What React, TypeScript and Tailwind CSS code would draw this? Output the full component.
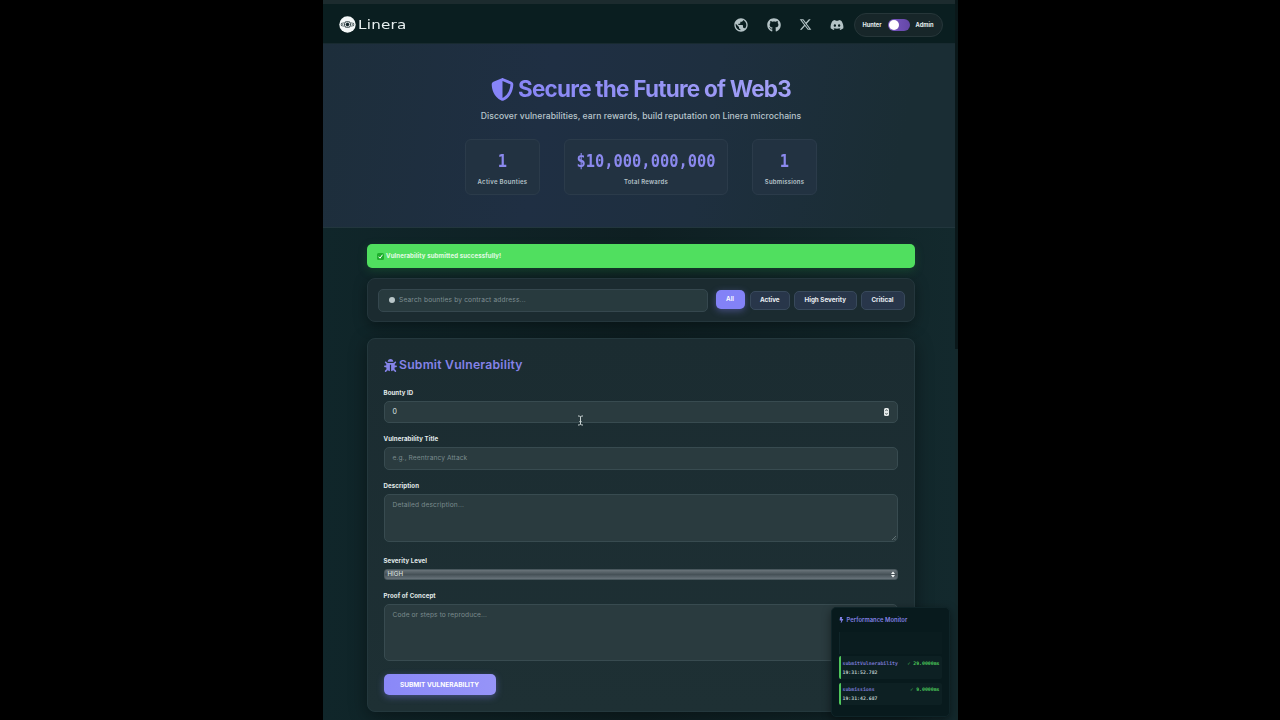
import type { ReactNode } from "react"
import { FaBolt, FaBug, FaDiscord, FaGithub } from "react-icons/fa"
import { FaShieldHalved, FaXTwitter } from "react-icons/fa6"
import { MdPublic } from "react-icons/md"

const stats = [
  { value: "1", label: "Active Bounties", box: "w-[75px]", tracking: "tracking-[0.3px]" },
  { value: "$10,000,000,000", label: "Total Rewards", box: "w-[164px]", tracking: "tracking-[0.25px]" },
  { value: "1", label: "Submissions", box: "w-[65px]", tracking: "tracking-[0.2px]" },
]

const calls = [
  { name: "submitVulnerability", duration: "29.0000ms", time: "19:31:52.782" },
  { name: "submissions", duration: "9.0000ms", time: "19:31:42.687" },
]

function Logo() {
  return (
    <div className="flex items-center gap-[2px]">
      <svg viewBox="0 0 17 17" className="h-[17px] w-[17px]" fill="none">
        <circle cx="8.5" cy="8.5" r="8.2" fill="#f4f8f8" />
        <rect x="5.6" y="5.8" width="5.8" height="5.4" rx="1.6" stroke="#13262a" strokeWidth="0.9" />
        <circle cx="8.5" cy="8.5" r="1.8" fill="#13262a" />
        <path
          d="M4.2 6.2Q3.2 8.5 4.2 10.8M12.8 6.2Q13.8 8.5 12.8 10.8M2.6 6.9Q1.9 8.5 2.6 10.1M14.4 6.9Q15.1 8.5 14.4 10.1"
          stroke="#13262a"
          strokeWidth="0.7"
        />
      </svg>
      <span className="origin-left scale-x-[1.26] font-['DejaVu_Sans'] text-[12px] leading-none tracking-[0.2px] text-[#e8f0f0]">
        Linera
      </span>
    </div>
  )
}

function Header() {
  return (
    <header className="flex h-[44px] shrink-0 items-center justify-between border-t-[4px] border-b border-t-[#1c2b2e] border-b-[#182a30] bg-[#0a1e20] pt-[2px] pr-[12px] pl-[16px]">
      <Logo />
      <div className="flex items-center text-[#b4c3c6]">
        <MdPublic className="mr-[18px] h-[16px] w-[16px]" />
        <FaGithub className="mr-[18px] h-[14px] w-[14px]" />
        <FaXTwitter className="mr-[18px] h-[13px] w-[13px]" />
        <FaDiscord className="mr-[10px] h-[14px] w-[14px]" />
        <div className="flex h-[24px] w-[89px] items-center justify-center gap-[6px] rounded-full border border-[#263639] bg-[#172629] pt-px text-[5.7px] font-bold text-[#e6eeee]">
          <span>Hunter</span>
          <div className="flex h-[12px] w-[22px] items-center rounded-full bg-gradient-to-r from-[#7a5ac4] to-[#6446a6] px-px">
            <div className="h-[10px] w-[10px] rounded-full bg-white" />
          </div>
          <span>Admin</span>
        </div>
      </div>
    </header>
  )
}

function Hero() {
  return (
    <section className="flex h-[184px] shrink-0 flex-col items-center border-b border-[#22363d] bg-[linear-gradient(100deg,#1d2e3b_0%,#1f2f43_35%,#1e2f3f_60%,#1a2d34_90%)] pt-[30px] pl-[5px]">
      <h1 className="flex h-[30px] items-center gap-[4px] bg-gradient-to-r from-[#8583f5] to-[#a3a0f6] bg-clip-text text-[22.5px] font-bold tracking-[-0.77px] whitespace-nowrap text-transparent">
        <FaShieldHalved className="h-[23px] w-[23px] text-[#8784f8]" />
        Secure the Future of Web3
      </h1>
      <p className="mt-[5px] h-[14px] text-[8.6px] leading-[14px] font-medium tracking-[0.05px] whitespace-nowrap text-[#b9c6cc]">
        Discover vulnerabilities, earn rewards, build reputation on Linera microchains
      </p>
      <div className="mt-[16px] flex gap-[24px]">
        {stats.map((stat) => (
          <div
            key={stat.label}
            className={`${stat.box} flex h-[55.5px] flex-col items-center rounded-[6px] border border-[#2b3b4a] bg-[#223241] pt-[10.5px]`}
          >
            <div className="h-[20px] scale-y-[1.12] font-['DejaVu_Sans_Mono'] text-[15.4px] leading-[20px] font-bold text-[#8b89ee]">
              {stat.value}
            </div>
            <div className={`${stat.tracking} mt-[6px] text-[6px] leading-[9px] font-semibold text-[#b5c2c9]`}>
              {stat.label}
            </div>
          </div>
        ))}
      </div>
    </section>
  )
}

function FilterButton({ className, children }: { className: string; children: ReactNode }) {
  return (
    <button
      className={`${className} mt-px h-[19px] shrink-0 rounded-[5px] border border-[#38495b] bg-[#28364a] text-[6.3px] leading-none font-bold text-[#e8edf2]`}
    >
      {children}
    </button>
  )
}

function Filters() {
  return (
    <div className="mt-[10px] flex h-[44px] items-center rounded-[8px] border border-[#24363c] bg-[#1b2b30] pl-[10px] shadow-[0_4px_14px_rgba(0,0,0,0.35)]">
      <div className="mr-[8px] flex h-[23px] w-[330px] shrink-0 items-center rounded-[5px] border border-[#35474e] bg-[#283a3e] pl-[10.5px]">
        <span className="mr-[4px] mb-px h-[6px] w-[6px] rounded-full bg-[#b9c6c9]" />
        <span className="pt-[2px] text-[6.6px] tracking-[0.17px] text-[#7f8f93]">
          Search bounties by contract address...
        </span>
      </div>
      <button className="mr-[5px] mb-px h-[19.5px] w-[29px] shrink-0 rounded-[5px] bg-[#8382f7] text-[6.3px] leading-none font-semibold text-white shadow-[0_2px_7px_rgba(131,130,247,0.4)]">
        All
      </button>
      <FilterButton className="mr-[4px] w-[40.5px]">Active</FilterButton>
      <FilterButton className="mr-[4px] w-[62.5px]">High Severity</FilterButton>
      <FilterButton className="w-[44px]">Critical</FilterButton>
    </div>
  )
}

function Label({ children }: { children: ReactNode }) {
  return (
    <label className="block h-[9px] text-[6.1px] leading-[9px] font-bold tracking-[0.1px] text-[#e4ecec]">{children}</label>
  )
}

function Spinner() {
  return (
    <svg viewBox="0 0 5 8" className="h-[8px] w-[5px]">
      <rect width="5" height="8" rx="1.6" fill="#e5eaea" />
      <path d="M1.3 3.1 2.5 1.6 3.7 3.1M1.3 4.9 2.5 6.4 3.7 4.9" fill="none" stroke="#3c4a4d" strokeWidth="0.8" />
    </svg>
  )
}

function SubmitForm() {
  const field = "rounded-[5px] border border-[#384b50] bg-[#2a3b3f] px-[8px] text-[6.6px] text-[#7b8b8e]"

  return (
    <div className="mt-[16px] h-[374px] rounded-[8px] border border-[#24383d] bg-gradient-to-b from-[#1b2c31] to-[#1e3034] pt-[18px] pr-[15.5px] pl-[16px] shadow-[0_4px_18px_rgba(0,0,0,0.4)]">
      <h2 className="flex h-[16px] items-center gap-[2.5px] text-[12.2px] font-semibold tracking-[0.22px] text-[#8583e8]">
        <FaBug className="h-[13px] w-[13px]" />
        Submit Vulnerability
      </h2>

      <div className="mt-[14.5px]">
        <Label>Bounty ID</Label>
        <div className={`${field} mt-[4.5px] flex h-[22px] items-center justify-between`}>
          <span className="text-[7px] text-[#dfe7e7]">0</span>
          <Spinner />
        </div>
      </div>

      <div className="mt-[11px]">
        <Label>Vulnerability Title</Label>
        <div className={`${field} mt-[4px] flex h-[22.5px] items-center pt-[1.5px] tracking-[0.11px]`}>
          e.g., Reentrancy Attack
        </div>
      </div>

      <div className="mt-[11px]">
        <Label>Description</Label>
        <div className={`${field} relative mt-[4px] h-[48.5px] pt-[6px] leading-[9px] tracking-[0.15px]`}>
          Detailed description...
          <svg viewBox="0 0 5 5" className="absolute right-px bottom-px h-[4px] w-[4px]">
            <path d="M0 5 5 0M3 5 5 3" stroke="#8b9a9c" strokeWidth="0.7" />
          </svg>
        </div>
      </div>

      <div className="mt-[14px]">
        <Label>Severity Level</Label>
        <div className="mt-[4px] flex h-[11px] items-center justify-between rounded-[3px] border border-[#4a585e] bg-gradient-to-b from-[#6a747a] via-[#465157] to-[#68737a] pr-[2px] pl-[3px] text-[6.2px] leading-none text-[#e2e8e8]">
          <span>HIGH</span>
          <svg viewBox="0 0 4 7" className="h-[7px] w-[4px]" fill="#f4f7f7">
            <path d="M0 2.9 2 0.4 4 2.9ZM0 4.1 2 6.6 4 4.1Z" />
          </svg>
        </div>
      </div>

      <div className="mt-[10.5px]">
        <Label>Proof of Concept</Label>
        <div className={`${field} mt-[4.5px] h-[57px] pt-[6px] leading-[9px] tracking-[0.11px]`}>
          Code or steps to reproduce...
        </div>
      </div>

      <button className="mt-[13px] block h-[21px] w-[112px] rounded-[5px] bg-gradient-to-r from-[#8a88f8] to-[#9694f8] pt-px text-[6.5px] leading-none font-bold text-white shadow-[0_2px_7px_rgba(131,130,247,0.4)]">
        SUBMIT VULNERABILITY
      </button>
    </div>
  )
}

function PerformanceMonitor() {
  return (
    <aside className="absolute top-[607px] left-[508px] h-[110px] w-[119px] rounded-[5px] border border-[#0f2428] bg-[#081a1d] px-[7px] pt-[7px] shadow-[0_3px_10px_rgba(0,0,0,0.45)]">
      <div className="flex h-[10px] items-center gap-[3px] text-[5.8px] font-semibold tracking-[0.06px] text-[#8583e8]">
        <FaBolt className="h-[6px] w-[5px]" />
        <span className="pt-px">Performance Monitor</span>
      </div>
      <div className="mt-[7px] h-[22px] border-l border-[#10262a] bg-[#0a1c1f]" />
      <div className="mt-[2px] flex flex-col gap-[4px]">
        {calls.map((call) => (
          <div
            key={call.name}
            className="h-[22.5px] rounded-[2px] border-l-2 border-[#4fc65c] bg-[#0d2023] pt-[2.5px] pr-[2px] pl-[2px] font-['DejaVu_Sans_Mono'] text-[4.85px] leading-[9px] font-bold"
          >
            <div className="flex justify-between whitespace-nowrap">
              <span className="text-[#7776cf]">{call.name}</span>
              <span className="text-[#4ccb5b]">✓ {call.duration}</span>
            </div>
            <div className="text-[#bdcaca]">{call.time}</div>
          </div>
        ))}
      </div>
    </aside>
  )
}

// Text cursor resting over the Bounty ID field
function TextCursor() {
  return (
    <svg viewBox="0 0 7 11" className="absolute top-[415px] left-[254px] h-[11px] w-[7px]" fill="none">
      <path d="M1 1H2.6L3.5 2 4.4 1H6M1 10H2.6L3.5 9 4.4 10H6M3.5 2V9M2.4 6.5H4.6" stroke="#c8d2d2" strokeWidth="1" />
    </svg>
  )
}

export default function App() {
  return (
    <div className="flex h-[720px] w-[1280px] justify-center overflow-hidden bg-black font-['Inter',sans-serif]">
      <div className="relative flex h-[720px] w-[635px] flex-col overflow-hidden bg-gradient-to-b from-[#11252a] via-[#0f2022] to-[#0e2024]">
        <div className="flex min-h-0 flex-1">
          <div className="flex w-[632px] flex-col bg-gradient-to-r from-[#10262a] via-[#0e1f22] to-[#13292d]">
            <Header />
            <Hero />
            <main className="mt-[16px] ml-[44px] w-[548px]">
              <div className="flex h-[24px] items-center rounded-[5px] bg-[#50df5f] pl-[10px] text-[6.1px] font-bold tracking-[0.11px] text-[#e2fbe4] shadow-[0_3px_10px_rgba(40,150,60,0.25)]">
                <span className="mr-[2.5px] flex h-[7px] w-[7px] items-center justify-center rounded-[1.5px] bg-[#1fae2d]">
                  <svg viewBox="0 0 7 7" className="h-[7px] w-[7px]">
                    <path d="M1.6 3.7 3 5.2 5.5 1.7" fill="none" stroke="#fff" strokeWidth="1" />
                  </svg>
                </span>
                Vulnerability submitted successfully!
              </div>
              <Filters />
              <SubmitForm />
            </main>
          </div>
          <div className="flex-1 bg-[#14282b]">
            <div className="h-[349px] bg-[#0a1719]" />
          </div>
        </div>
        <PerformanceMonitor />
        <TextCursor />
      </div>
    </div>
  )
}
